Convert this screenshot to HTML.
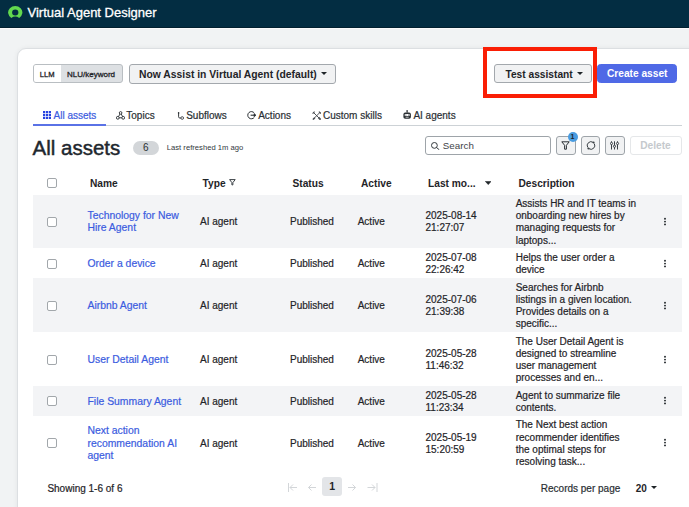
<!DOCTYPE html>
<html><head><meta charset="utf-8">
<style>
*{box-sizing:border-box;margin:0;padding:0}
html,body{width:689px;height:507px;overflow:hidden;background:#F1F3F4;font-family:"Liberation Sans",sans-serif;color:#1F2428;position:relative}
.a{position:absolute;white-space:nowrap}
#hdr{position:absolute;left:0;top:0;width:689px;height:28px;background:#032D42;border-bottom:1px solid #02202F}
#hline{position:absolute;left:0;top:28px;width:689px;height:1px;background:#FAFBFB}
#card{position:absolute;left:17px;top:48px;width:700px;height:480px;background:#fff;border:1px solid #DCDFE2;border-radius:9px;box-shadow:0 0 5px rgba(0,0,0,.06)}
.btn{position:absolute;border:1px solid #A3A8AD;border-radius:3px;background:#F1F2F3;font-weight:bold;font-size:10.2px;color:#1F2428;line-height:19px;white-space:nowrap}
.tri{display:inline-block;width:0;height:0;border-left:3.5px solid transparent;border-right:3.5px solid transparent;border-top:3.8px solid #1F2428;vertical-align:middle;margin-left:4px;position:relative;top:-1.5px}
.tab{position:absolute;top:109px;font-size:10px;line-height:13px;color:#2A2F33;white-space:nowrap;-webkit-text-stroke:0.2px currentColor}
.ib{position:absolute;top:135.5px;width:19.5px;height:19.5px;border:1px solid #9EA4A9;border-radius:3px;background:#F1F2F3}
.th{position:absolute;top:176.7px;font-weight:bold;font-size:10.2px;line-height:13px;white-space:nowrap}
.row{position:absolute;left:33px;width:649px}
.row.s{background:#F3F4F6}
.cb{position:absolute;left:47.1px;width:10px;height:10px;border:1.1px solid #A2A7AB;border-radius:2px;background:#fff}
.c{position:absolute;font-size:10px;line-height:12.2px;white-space:nowrap;-webkit-text-stroke:0.2px currentColor}
.lk{color:#3B5CE0;font-size:10.4px}
.km{position:absolute;left:664.3px;width:2px}
.km i{display:block;width:1.8px;height:1.8px;border-radius:50%;background:#1F2428;margin-bottom:1.1px}
</style></head><body>
<div id="hdr"></div>
<div id="hline"></div>
<!-- logo -->
<svg class="a" style="left:8px;top:5px" width="15" height="14" viewBox="0 0 15 14">
<path d="M3.3 12.9A7.15 6.55 0 1 1 11.2 12.9Q7.25 10.2 3.3 12.9ZM4.1 7.5A3.15 2.95 0 1 0 10.4 7.5A3.15 2.95 0 1 0 4.1 7.5Z" fill="#62D84E" fill-rule="evenodd"/>
</svg>
<div class="a" style="left:27.5px;top:4.9px;font-size:13px;line-height:16px;color:#fff;-webkit-text-stroke:0.3px #fff">Virtual Agent Designer</div>

<div id="card"></div>

<!-- toggle -->
<div class="a" style="left:33px;top:64px;width:90px;height:19px;border:1px solid #B9BEC2;border-radius:3px;background:#DDE0E3"></div>
<div class="a" style="left:34px;top:65px;width:27px;height:17px;background:#fff;border-radius:2px 0 0 2px"></div>
<div class="a" style="left:39.8px;top:69.5px;font-size:7.6px;line-height:9px;-webkit-text-stroke:0.3px #1F2428">LLM</div>
<div class="a" style="left:67px;top:69.5px;font-size:8px;line-height:9px;-webkit-text-stroke:0.3px #1F2428">NLU/keyword</div>

<div class="btn" style="left:128.5px;top:64px;width:207px;height:19.5px;padding-left:9.5px;font-size:10.35px">Now Assist in Virtual Agent (default)<span class="tri"></span></div>
<div class="btn" style="left:494.3px;top:63.7px;width:97.3px;height:19.6px;padding-left:10.2px">Test assistant<span class="tri"></span></div>
<div class="btn" style="left:597.3px;top:64px;width:79.7px;height:18.8px;line-height:17.5px;padding-left:8.6px;background:#4F69E6;border-color:#4F69E6;color:#fff;border-radius:3.5px">Create asset</div>
<div class="a" style="left:482.7px;top:47px;width:114.2px;height:50.5px;border:4.7px solid #FA1E05"></div>

<!-- tabs -->
<div class="a" style="left:33px;top:125px;width:649px;height:1px;background:#CDD2D6"></div>
<div class="a" style="left:33px;top:124px;width:72.5px;height:2px;background:#5A72E6"></div>
<svg class="a" style="left:43px;top:111px" width="8" height="8" viewBox="0 0 8 8" fill="#2743E0"><rect x="0" y="0" width="2.2" height="2.2"/><rect x="2.9" y="0" width="2.2" height="2.2"/><rect x="5.8" y="0" width="2.2" height="2.2"/><rect x="0" y="2.9" width="2.2" height="2.2"/><rect x="2.9" y="2.9" width="2.2" height="2.2"/><rect x="5.8" y="2.9" width="2.2" height="2.2"/><rect x="0" y="5.8" width="2.2" height="2.2"/><rect x="2.9" y="5.8" width="2.2" height="2.2"/><rect x="5.8" y="5.8" width="2.2" height="2.2"/></svg>
<div class="tab" style="left:53.5px;color:#3B5CE0">All assets</div>
<svg class="a" style="left:115.8px;top:110.8px" width="9.5" height="9" viewBox="0 0 9.5 9" fill="none" stroke="#2A2F33" stroke-width="0.95"><circle cx="4.6" cy="1.9" r="1.3"/><circle cx="1.8" cy="6.8" r="1.4"/><circle cx="7.2" cy="6.8" r="1.4"/><path d="M3.9 3.1L2.6 5.5M5.3 3.1L6.5 5.5M3.2 6.8H5.8"/></svg>
<div class="tab" style="left:126.3px">Topics</div>
<svg class="a" style="left:176.5px;top:110.5px" width="7" height="9" viewBox="0 0 7 9" fill="none" stroke="#2A2F33" stroke-width="0.95"><circle cx="1.6" cy="1.9" r="0.8" fill="#2A2F33" stroke="none"/><path d="M1.6 1.9V5.8Q1.6 7 2.8 7H3.9"/><circle cx="5.2" cy="7" r="1.35" stroke-width="0.8"/></svg>
<div class="tab" style="left:186.2px">Subflows</div>
<svg class="a" style="left:247px;top:111px" width="10" height="9" viewBox="0 0 10 9" fill="none" stroke="#2A2F33" stroke-width="1"><path d="M7.3 2.1A3.6 3.6 0 1 0 7.3 6.3"/><path d="M3.6 4.2H8.6" stroke-width="1.1"/><path d="M7 2.6L9 4.2 7 5.8Z" fill="#2A2F33" stroke-width="0.6"/></svg>
<div class="tab" style="left:258.2px">Actions</div>
<svg class="a" style="left:311.5px;top:111px" width="9.5" height="9" viewBox="0 0 9.5 9" fill="none" stroke="#4A4F54" stroke-width="1"><path d="M1.3 1.3L8.2 8.2M8.2 1.2L1.2 8.2"/><path d="M0.6 2.6L2.6 0.6M6.9 0.6L8.9 2.6" stroke-width="1.2"/><path d="M6.4 6.4L8.6 8.6" stroke-width="1.9"/><path d="M1 8.5L2.8 6.7" stroke-width="1.6"/></svg>
<div class="tab" style="left:323px">Custom skills</div>
<svg class="a" style="left:402.8px;top:110.3px" width="8.5" height="9" viewBox="0 0 8.5 9"><circle cx="4.1" cy="0.9" r="0.8" fill="#2A2F33"/><rect x="3.7" y="1" width="0.8" height="2" fill="#2A2F33"/><rect x="0.4" y="2.6" width="7.5" height="6.2" rx="1.8" fill="#2A2F33"/><rect x="1.6" y="4" width="5.1" height="2" rx="0.8" fill="#fff"/><circle cx="2.9" cy="5" r="0.55" fill="#2A2F33"/><circle cx="5.4" cy="5" r="0.55" fill="#2A2F33"/><rect x="2.6" y="6.8" width="3.1" height="0.7" fill="#fff"/></svg>
<div class="tab" style="left:413.4px">AI agents</div>

<!-- heading -->
<div class="a" style="left:32.5px;top:136.4px;font-size:20.5px;line-height:24px;color:#1E272E;-webkit-text-stroke:0.45px #1E272E">All assets</div>
<div class="a" style="left:132.5px;top:141px;width:26.5px;height:13.5px;border-radius:7px;background:#D3D6D9;font-size:10px;line-height:13.5px;text-align:center;color:#2A2F33">6</div>
<div class="a" style="left:166.8px;top:143.2px;font-size:7.65px;line-height:10px;color:#33393E">Last refreshed 1m ago</div>

<!-- toolbar -->
<div class="a" style="left:425px;top:135.5px;width:126px;height:19.5px;border:1px solid #9EA4A9;border-radius:3px;background:#fff"></div>
<svg class="a" style="left:430.5px;top:141.5px" width="9" height="8" viewBox="0 0 9 8" fill="none" stroke="#2A3035" stroke-width="0.95"><circle cx="3.4" cy="3.4" r="2.9"/><path d="M5.5 5.5L8.3 7.8"/></svg>
<div class="a" style="left:442.8px;top:140px;font-size:9.8px;line-height:12px;color:#3F454A">Search</div>
<div class="ib" style="left:556px"></div>
<svg class="a" style="left:561px;top:141px" width="9" height="9" viewBox="0 0 9 9" fill="none" stroke="#2A3035" stroke-width="1"><path d="M0.8 0.8H8.2L5.4 4.3V8.2H3.6V4.3Z" stroke-linejoin="round"/></svg>
<div class="a" style="left:567.5px;top:132px;width:10px;height:10px;border-radius:5px;background:#4A9CE0;color:#1F2428;font-size:7px;font-weight:bold;line-height:10px;text-align:center">1</div>
<div class="ib" style="left:580.5px"></div>
<svg class="a" style="left:585.5px;top:140.8px" width="10" height="9" viewBox="0 0 10 9" fill="none" stroke="#3A4045" stroke-width="1"><path d="M8.29 2.6A3.8 3.8 0 0 1 2.82 7.61"/><path d="M1.71 6.4A3.8 3.8 0 0 1 7.18 1.39"/><circle cx="7.6" cy="1.6" r="1" fill="#3A4045" stroke="none"/><circle cx="2.4" cy="7.4" r="1" fill="#3A4045" stroke="none"/></svg>
<div class="ib" style="left:605px"></div>
<svg class="a" style="left:610px;top:141px" width="10" height="9" viewBox="0 0 10 9" fill="none" stroke="#3A4045" stroke-width="1"><path d="M1.5 0.3V1.4M1.5 3.6V8.5M4.5 0.3V4.2M4.5 6.4V8.5M7.5 0.3V1.4M7.5 3.6V8.5"/><circle cx="1.5" cy="2.5" r="1.1"/><circle cx="4.5" cy="5.3" r="1.1"/><circle cx="7.5" cy="2.5" r="1.1"/></svg>
<div class="a" style="left:629.5px;top:135.5px;width:52px;height:19.5px;border:1px solid #E5E7E9;border-radius:3px;background:#fff;color:#C5C9CD;font-weight:bold;font-size:10.2px;line-height:17.5px;text-align:center">Delete</div>

<!-- table header -->
<div class="cb" style="top:177.5px"></div>
<div class="th" style="left:90px">Name</div>
<div class="th" style="left:202.6px">Type</div>
<svg class="a" style="left:229px;top:178.8px" width="7" height="7" viewBox="0 0 7 7" fill="none" stroke="#3A4045" stroke-width="1"><path d="M0.6 0.6H6.2L3.9 3.6V5.9H2.9V3.6Z" stroke-linejoin="round"/></svg>
<div class="th" style="left:292.5px">Status</div>
<div class="th" style="left:361px">Active</div>
<div class="th" style="left:428px">Last mo...</div>
<svg class="a" style="left:484.5px;top:181px" width="6.5" height="4" viewBox="0 0 6.5 4"><path d="M0.4 0.4H6.1L3.25 3.6Z" fill="#1F2428" stroke="#1F2428" stroke-width="0.6" stroke-linejoin="round"/></svg>
<div class="th" style="left:518.5px">Description</div>

<!-- rows -->
<div class="row s" style="top:194.5px;height:53.5px"></div>
<div class="row" style="top:248px;height:30px"></div>
<div class="row s" style="top:278px;height:54px"></div>
<div class="row" style="top:332px;height:54px"></div>
<div class="row s" style="top:386px;height:29.5px"></div>
<div class="row" style="top:415.5px;height:54px"></div>

<!-- row 1 -->
<div class="cb" style="top:216.75px"></div>
<div class="c lk" style="left:87.5px;top:210.28px">Technology for New<br>Hire Agent</div>
<div class="c" style="left:200px;top:216.38px">AI agent</div>
<div class="c" style="left:290px;top:216.38px">Published</div>
<div class="c" style="left:357.7px;top:216.38px">Active</div>
<div class="c" style="left:425.5px;top:210.28px">2025-08-14<br>21:27:07</div>
<div class="c" style="left:515.7px;top:198.08px">Assists HR and IT teams in<br>onboarding new hires by<br>managing requests for<br>laptops...</div>
<svg class="a" style="left:663.3px;top:216.75px" width="4" height="9" viewBox="0 0 4 9" fill="#1F2428"><circle cx="2" cy="1.8" r="0.95"/><circle cx="2" cy="4.6" r="0.95"/><circle cx="2" cy="7.4" r="0.95"/></svg>

<!-- row 2 -->
<div class="cb" style="top:258.5px"></div>
<div class="c lk" style="left:87.5px;top:258.13px">Order a device</div>
<div class="c" style="left:200px;top:258.13px">AI agent</div>
<div class="c" style="left:290px;top:258.13px">Published</div>
<div class="c" style="left:357.7px;top:258.13px">Active</div>
<div class="c" style="left:425.5px;top:252.03px">2025-07-08<br>22:26:42</div>
<div class="c" style="left:515.7px;top:252.03px">Helps the user order a<br>device</div>
<svg class="a" style="left:663.3px;top:258.5px" width="4" height="9" viewBox="0 0 4 9" fill="#1F2428"><circle cx="2" cy="1.8" r="0.95"/><circle cx="2" cy="4.6" r="0.95"/><circle cx="2" cy="7.4" r="0.95"/></svg>

<!-- row 3 -->
<div class="cb" style="top:300.5px"></div>
<div class="c lk" style="left:87.5px;top:300.13px">Airbnb Agent</div>
<div class="c" style="left:200px;top:300.13px">AI agent</div>
<div class="c" style="left:290px;top:300.13px">Published</div>
<div class="c" style="left:357.7px;top:300.13px">Active</div>
<div class="c" style="left:425.5px;top:294.03px">2025-07-06<br>21:39:38</div>
<div class="c" style="left:515.7px;top:281.83px">Searches for Airbnb<br>listings in a given location.<br>Provides details on a<br>specific...</div>
<svg class="a" style="left:663.3px;top:300.5px" width="4" height="9" viewBox="0 0 4 9" fill="#1F2428"><circle cx="2" cy="1.8" r="0.95"/><circle cx="2" cy="4.6" r="0.95"/><circle cx="2" cy="7.4" r="0.95"/></svg>

<!-- row 4 -->
<div class="cb" style="top:354.5px"></div>
<div class="c lk" style="left:87.5px;top:354.13px">User Detail Agent</div>
<div class="c" style="left:200px;top:354.13px">AI agent</div>
<div class="c" style="left:290px;top:354.13px">Published</div>
<div class="c" style="left:357.7px;top:354.13px">Active</div>
<div class="c" style="left:425.5px;top:348.03px">2025-05-28<br>11:46:32</div>
<div class="c" style="left:515.7px;top:335.83px">The User Detail Agent is<br>designed to streamline<br>user management<br>processes and en...</div>
<svg class="a" style="left:663.3px;top:354.5px" width="4" height="9" viewBox="0 0 4 9" fill="#1F2428"><circle cx="2" cy="1.8" r="0.95"/><circle cx="2" cy="4.6" r="0.95"/><circle cx="2" cy="7.4" r="0.95"/></svg>

<!-- row 5 -->
<div class="cb" style="top:396.25px"></div>
<div class="c lk" style="left:87.5px;top:395.88px">File Summary Agent</div>
<div class="c" style="left:200px;top:395.88px">AI agent</div>
<div class="c" style="left:290px;top:395.88px">Published</div>
<div class="c" style="left:357.7px;top:395.88px">Active</div>
<div class="c" style="left:425.5px;top:389.78px">2025-05-28<br>11:23:34</div>
<div class="c" style="left:515.7px;top:389.78px">Agent to summarize file<br>contents.</div>
<svg class="a" style="left:663.3px;top:396.25px" width="4" height="9" viewBox="0 0 4 9" fill="#1F2428"><circle cx="2" cy="1.8" r="0.95"/><circle cx="2" cy="4.6" r="0.95"/><circle cx="2" cy="7.4" r="0.95"/></svg>

<!-- row 6 -->
<div class="cb" style="top:438.0px"></div>
<div class="c lk" style="left:87.5px;top:425.43px">Next action<br>recommendation AI<br>agent</div>
<div class="c" style="left:200px;top:437.63px">AI agent</div>
<div class="c" style="left:290px;top:437.63px">Published</div>
<div class="c" style="left:357.7px;top:437.63px">Active</div>
<div class="c" style="left:425.5px;top:431.53px">2025-05-19<br>15:20:59</div>
<div class="c" style="left:515.7px;top:419.33px">The Next best action<br>recommender identifies<br>the optimal steps for<br>resolving task...</div>
<svg class="a" style="left:663.3px;top:438.0px" width="4" height="9" viewBox="0 0 4 9" fill="#1F2428"><circle cx="2" cy="1.8" r="0.95"/><circle cx="2" cy="4.6" r="0.95"/><circle cx="2" cy="7.4" r="0.95"/></svg>

<!-- footer -->
<div class="a" style="left:47.4px;top:482.8px;font-size:10px;line-height:12px;-webkit-text-stroke:0.2px #1F2428">Showing 1-6 of 6</div>
<svg class="a" style="left:287px;top:482px" width="92" height="11" viewBox="0 0 92 11" fill="none" stroke="#D3D6D9" stroke-width="1"><path d="M1.5 1V10M10 5.5H3M6 2.5L3 5.5 6 8.5"/><path d="M29 5.5H21.5M24.5 2.5L21.5 5.5 24.5 8.5"/><path d="M61 5.5H68.5M65.5 2.5L68.5 5.5 65.5 8.5"/><path d="M90 1V10M80.5 5.5H88M85 2.5L88 5.5 85 8.5"/></svg>
<div class="a" style="left:322.3px;top:477.2px;width:19.5px;height:19.3px;border-radius:3px;background:#E3E5E8;font-weight:bold;font-size:10.5px;line-height:19.3px;text-align:center;color:#1F2428">1</div>
<div class="a" style="left:540.8px;top:482.8px;font-size:10px;line-height:12px;color:#2A2F33;-webkit-text-stroke:0.2px #2A2F33">Records per page</div>
<div class="a" style="left:635.7px;top:482.8px;font-size:10px;line-height:12px;font-weight:bold">20</div>
<div class="a" style="left:650.5px;top:486px;width:0;height:0;border-left:3px solid transparent;border-right:3px solid transparent;border-top:3.5px solid #1F2428"></div>
</body></html>
